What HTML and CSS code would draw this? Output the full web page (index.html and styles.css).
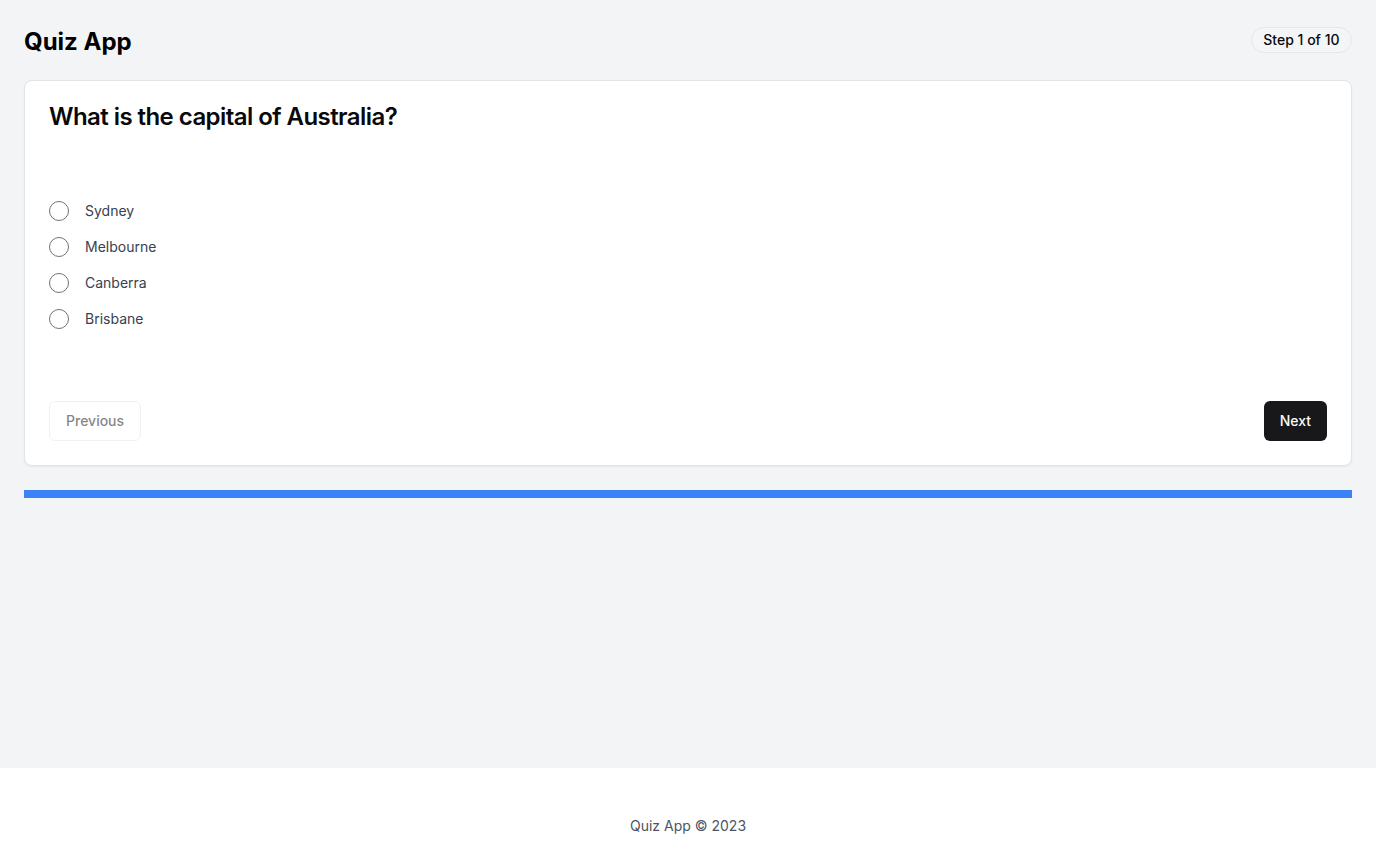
FILE: index.html
```html
<!DOCTYPE html>
<html lang="en">
<head>
<meta charset="utf-8">
<title>Quiz App</title>
<link rel="stylesheet" href="styles.css">
</head>
<body>
<main class="main">
  <header class="top">
    <h1 class="app-title">Quiz App</h1>
    <span class="badge">Step 1 of 10</span>
  </header>
  <section class="card">
    <div class="card-header">
      <h2 class="card-title">What is the capital of Australia?</h2>
    </div>
    <div class="card-content">
      <label class="option"><span class="radio"></span><span class="opt-label">Sydney</span></label>
      <label class="option"><span class="radio"></span><span class="opt-label">Melbourne</span></label>
      <label class="option"><span class="radio"></span><span class="opt-label">Canberra</span></label>
      <label class="option"><span class="radio"></span><span class="opt-label">Brisbane</span></label>
    </div>
    <div class="card-footer">
      <button class="btn btn-outline" disabled>Previous</button>
      <button class="btn btn-primary">Next</button>
    </div>
  </section>
  <div class="progress"><div class="progress-fill" style="width:100%"></div></div>
</main>
<footer class="footer">Quiz App © 2023</footer>
</body>
</html>
```

FILE: styles.css
```css
* { box-sizing: border-box; }
html, body { margin: 0; padding: 0; }
body {
  font-family: Inter, "Liberation Sans", sans-serif;
  background: #ffffff;
  color: #09090b;
}
.main {
  height: 768px;
  background: #f3f4f6;
  padding: 24px;
}
.top {
  display: flex;
  justify-content: space-between;
  align-items: center;
  height: 32px;
  margin-bottom: 24px;
}
.app-title {
  margin: 0;
  padding-top: 3px;
  font-size: 24px;
  line-height: 24px;
  font-weight: 700;
  color: #000;
}
.badge {
  display: inline-flex;
  align-items: center;
  border: 1px solid #e5e7eb;
  border-radius: 9999px;
  padding: 2px 11.5px;
  font-size: 14px;
  line-height: 20px;
  font-weight: 500;
  color: #09090b;
  background: #f4f5f7;
}
.card {
  background: #fff;
  border: 1px solid #e4e4e7;
  border-radius: 8px;
  box-shadow: 0 1px 2px rgba(0,0,0,0.05);
}
.card-header { padding: 24px 24px 0; }
.card-title {
  margin: 0;
  font-size: 24px;
  line-height: 24px;
  font-weight: 600;
  letter-spacing: -0.56px;
  color: #09090b;
}
.card-content {
  padding: 72px 24px 0;
  display: flex;
  flex-direction: column;
  gap: 16px;
}
.option {
  display: flex;
  align-items: center;
  gap: 16px;
  height: 20px;
}
.radio {
  width: 20px;
  height: 20px;
  border-radius: 50%;
  border: 1px solid #71717a;
  flex: none;
}
.opt-label {
  font-size: 14px;
  line-height: 20px;
  color: #374151;
}
.card-footer {
  display: flex;
  justify-content: space-between;
  align-items: center;
  padding: 72px 24px 24px;
}
.btn {
  font-family: inherit;
  height: 40px;
  padding: 0 16px;
  border-radius: 6px;
  font-size: 14px;
  font-weight: 500;
  line-height: 20px;
  cursor: pointer;
}
.btn-outline {
  background: #fff;
  border: 1px solid #e4e4e7;
  color: #09090b;
  opacity: 0.5;
}
.btn-primary {
  background: #18181b;
  color: #fafafa;
  border: none;
}
.progress {
  margin-top: 24px;
  height: 8px;
  background: #e5e7eb;
}
.progress-fill {
  height: 100%;
  background: #3b82f6;
}
.footer {
  background: #fff;
  text-align: center;
  padding: 48px 0 0;
  height: 84px;
  font-size: 14px;
  line-height: 20px;
  color: #4b5563;
}
```
